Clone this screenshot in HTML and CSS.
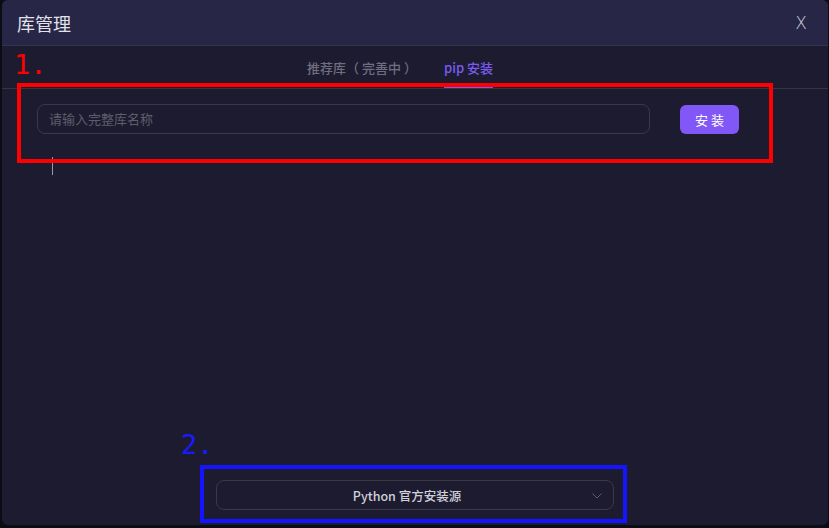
FILE: index.html
```html
<!DOCTYPE html>
<html lang="zh">
<head>
<meta charset="utf-8">
<link rel="stylesheet" href="styles.css">
</head>
<body>
<div class="dialog">
  <div class="header">
    <div class="title">库管理</div>
    <div class="close">X</div>
  </div>
  <div class="tabs">
    <div class="tab">推荐库<span class="po">（</span>完善中<span class="pc">）</span></div>
    <div class="tab active">pip 安装</div>
  </div>
  <div class="content">
    <div class="row">
      <div class="input">请输入完整库名称</div>
      <button class="btn">安 装</button>
    </div>
    <div class="caret"></div>
  </div>
  <div class="footer">
    <div class="select">
      <span>Python 官方安装源</span>
      <svg class="chev" width="10" height="6" viewBox="0 0 10 6"><path d="M0.5 0.5 L5 5 L9.5 0.5" fill="none" stroke="#5d5c6b" stroke-width="1"/></svg>
    </div>
  </div>
  <div class="anno-num red">1.</div>
  <div class="anno-box red-box"></div>
  <div class="anno-num blue">2.</div>
  <div class="anno-box blue-box"></div>
</div>
</body>
</html>
```
FILE: styles.css
```css
* { box-sizing: border-box; }
html, body { margin: 0; padding: 0; }
body {
  width: 829px; height: 528px;
  background: #0b0d14;
  font-family: "Noto Sans CJK SC", "Noto Sans", sans-serif;
  overflow: hidden;
}
.dialog {
  position: relative;
  margin-left: 2px;
  width: 826px; height: 525px;
  background: #1d1b30;
  border-radius: 6px;
  display: flex; flex-direction: column;
  overflow: hidden;
}
.header {
  height: 46px;
  background: #272647;
  border-bottom: 1px solid #34334a;
  display: flex; align-items: center; justify-content: space-between;
  padding: 0 21px 0 15px;
}
.title { color: #e2e2ea; font-size: 18px; }
.close { color: #cfcfdc; font-size: 17px; font-family: "DejaVu Sans", sans-serif; font-weight: 300; }
.tabs {
  height: 43px;
  border-bottom: 1px solid #35343f;
  display: flex; justify-content: center; gap: 27px;
  padding-right: 30px;
  text-spacing-trim: space-all;
}
.tab {
  font-size: 13px; color: #6f6e80;
  display: flex; align-items: center;
  padding-top: 2px;
  border-bottom: 2px solid transparent;
  font-weight: 500;
}
.po { margin-right: 3px; }
.pc { margin-left: 3px; }
.tab.active { color: #7b5cf0; border-bottom-color: #7d5cf5; }
.content { flex: 1; padding: 15px 0 0 35px; }
.row { display: flex; align-items: center; gap: 30px; }
.input {
  width: 613px; height: 30px;
  border: 1px solid #3a3947;
  border-radius: 8px;
  color: #5e5d6a; font-size: 13px;
  display: flex; align-items: center; padding-left: 11px; padding-bottom: 1px;
}
.btn {
  width: 59px; height: 29px;
  border: none; border-radius: 6px;
  background: #8157f7; color: #fff;
  font-family: inherit; font-size: 13px;
}
.caret { width: 1px; height: 18px; background: #9a9aa4; margin: 23px 0 0 15px; }
.footer { height: 50px; display: flex; justify-content: center; padding-top: 5px; }
.select {
  position: relative;
  width: 398px; height: 30px;
  border: 1px solid #3a3947; border-radius: 8px;
  display: flex; align-items: center; justify-content: center;
  padding-right: 16px;
  color: #d0d0d8; font-size: 12.5px; font-weight: 500;
}
.chev { position: absolute; right: 11px; top: 12px; }
.anno-num { position: absolute; font-family: "DejaVu Sans Mono", monospace; font-size: 27px; line-height: 1; }
.red { color: #ff0000; left: 12px; top: 51px; }
.blue { color: #1a1aff; left: 179px; top: 431px; }
.anno-box { position: absolute; border: 4px solid; }
.red-box { border-color: #ff0000; left: 15px; top: 83px; width: 756px; height: 80px; }
.blue-box { border-color: #1414ff; left: 198px; top: 465px; width: 427px; height: 58px; }
```
